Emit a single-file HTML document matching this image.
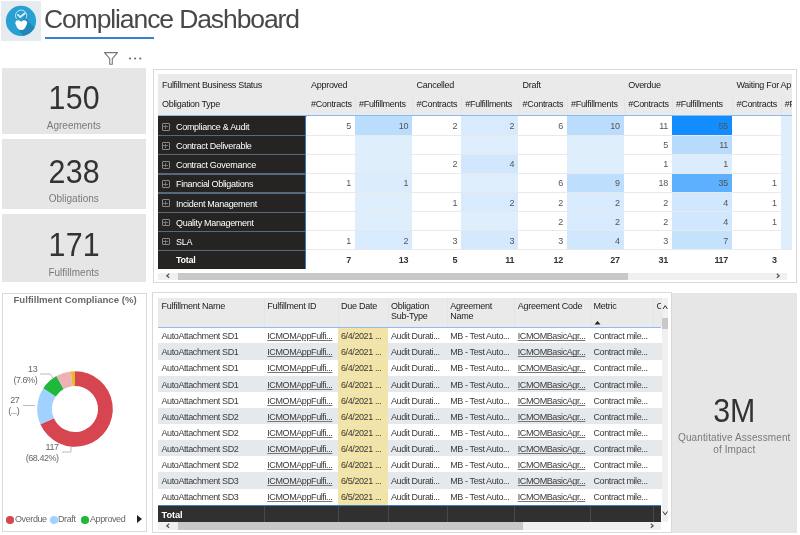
<!DOCTYPE html><html><head><meta charset="utf-8"><style>
*{margin:0;padding:0;box-sizing:border-box}
html,body{width:800px;height:535px;overflow:hidden;background:#fff;font-family:"Liberation Sans",sans-serif}
.abs{position:absolute}
.t{position:absolute;white-space:nowrap;line-height:1}
.card{position:absolute;background:#e6e6e6}
.num{position:absolute;left:0;right:0;text-align:center;color:#333;font-size:33px;line-height:1;letter-spacing:0.3px;transform:scaleX(0.92)}
.lab{position:absolute;left:0;right:0;text-align:center;color:#7a7a7a;font-size:10px;line-height:1}
.mx{font-size:9px;letter-spacing:-0.3px;color:#1a1a1a}
.dt{font-size:9px;letter-spacing:-0.4px;color:#3a3a3a}
.u{text-decoration:underline;text-decoration-color:#777}
</style></head><body><div style="position:absolute;left:0;top:0;width:800px;height:535px;will-change:transform">
<div class="abs" style="left:1px;top:1px;width:40px;height:40px;background:#e6ebef"></div>
<svg class="abs" style="left:0;top:0" width="44" height="44" viewBox="0 0 44 44">
<defs><clipPath id="cc"><circle cx="21" cy="20.9" r="15.1"/></clipPath></defs>
<circle cx="21" cy="20.9" r="15.1" fill="#29a0d4"/>
<g clip-path="url(#cc)"><path d="M26.5 12.5 L27.8 21 L45 38 L30 46 L19 30 Z" fill="#1f7fae" opacity="0.75"/></g>
<path d="M16.6 19 A5.6 5.6 0 1 1 25.6 19" fill="none" stroke="#fff" stroke-width="0.9" opacity="0.8"/>
<path d="M17.5 14.3 L20.2 17 L25.3 13" fill="none" stroke="#fff" stroke-width="1.7" opacity="0.85"/>
<path d="M15.2 22.5 L16.5 20.5 L18.8 20.3 L21.2 21.8 L23.6 20.3 L25.9 20.5 L27.3 22.5 L26.6 24.8 L25.2 27.8 L23.6 29.6 L21.2 30 L18.8 29.6 L17.2 27.8 L15.8 24.8 Z" fill="#fff"/>
</svg>
<div class="t" style="left:44px;top:3.5px;font-size:26.5px;color:#484848;letter-spacing:-1.1px;line-height:30px">Compliance Dashboard</div>
<div class="abs" style="left:44.5px;top:37px;width:109.5px;height:1.5px;background:#3a80d2"></div>
<svg class="abs" style="left:100px;top:48px" width="50" height="20" viewBox="0 0 50 20">
<path d="M4.5 4.6 H17.5 L12.3 10.6 V16.3 H9.7 V10.6 Z" fill="none" stroke="#777" stroke-width="1.1" stroke-linejoin="round"/>
<circle cx="30" cy="10.5" r="1.05" fill="#666"/><circle cx="35.1" cy="10.5" r="1.05" fill="#666"/><circle cx="40.3" cy="10.5" r="1.05" fill="#666"/>
</svg>
<div class="card" style="left:1.5px;top:68px;width:144.5px;height:66px"><div class="num" style="top:13.3px">150</div><div class="lab" style="top:52.9px">Agreements</div></div>
<div class="card" style="left:1.5px;top:139px;width:144.5px;height:70px"><div class="num" style="top:15.8px">238</div><div class="lab" style="top:55.2px">Obligations</div></div>
<div class="card" style="left:1.5px;top:214px;width:144.5px;height:68px"><div class="num" style="top:13.6px">171</div><div class="lab" style="top:53.5px">Fulfillments</div></div>
<div class="abs" style="left:152.5px;top:68.5px;width:644px;height:214.3px;border:1px solid #d9d9d9;background:#fff"></div>
<div class="abs" style="left:158px;top:74px;width:634px;height:41px;background:#eaeaea"></div>
<div class="abs" style="left:158px;top:115px;width:634px;height:1.5px;background:#86baf0"></div>
<div class="t mx" style="left:162px;top:80.5px">Fulfillment Business Status</div>
<div class="t mx" style="left:162px;top:99.5px">Obligation Type</div>
<div style="position:absolute;left:0;top:0;width:792px;height:535px;overflow:hidden">
<div class="t mx" style="left:311.1px;top:80.5px">Approved</div>
<div class="t mx" style="left:311.1px;top:99.5px">#Contracts</div>
<div class="t mx" style="left:359px;top:99.5px">#Fulfillments</div>
<div class="t mx" style="left:416.6px;top:80.5px">Cancelled</div>
<div class="t mx" style="left:416.6px;top:99.5px">#Contracts</div>
<div class="t mx" style="left:465.3px;top:99.5px">#Fulfillments</div>
<div class="t mx" style="left:522.6px;top:80.5px">Draft</div>
<div class="t mx" style="left:522.6px;top:99.5px">#Contracts</div>
<div class="t mx" style="left:571px;top:99.5px">#Fulfillments</div>
<div class="t mx" style="left:628.25px;top:80.5px">Overdue</div>
<div class="t mx" style="left:628.25px;top:99.5px">#Contracts</div>
<div class="t mx" style="left:676px;top:99.5px">#Fulfillments</div>
<div class="t mx" style="left:736.5px;top:80.5px">Waiting For Ap</div>
<div class="t mx" style="left:736.5px;top:99.5px">#Contracts</div>
<div class="t mx" style="left:784.7px;top:99.5px">#Fulfillments</div>
<div class="abs" style="left:355px;top:95px;width:1px;height:20px;background:#dde6ee"></div>
<div class="abs" style="left:412.1px;top:95px;width:1px;height:20px;background:#dde6ee"></div>
<div class="abs" style="left:461.3px;top:95px;width:1px;height:20px;background:#dde6ee"></div>
<div class="abs" style="left:518.1px;top:95px;width:1px;height:20px;background:#dde6ee"></div>
<div class="abs" style="left:567px;top:95px;width:1px;height:20px;background:#dde6ee"></div>
<div class="abs" style="left:623.75px;top:95px;width:1px;height:20px;background:#dde6ee"></div>
<div class="abs" style="left:672px;top:95px;width:1px;height:20px;background:#dde6ee"></div>
<div class="abs" style="left:732px;top:95px;width:1px;height:20px;background:#dde6ee"></div>
<div class="abs" style="left:780.7px;top:95px;width:1px;height:20px;background:#dde6ee"></div>
<div class="abs" style="left:158px;top:116.0px;width:148px;height:19.14px;background:#252423"></div>
<div class="abs" style="left:306.6px;top:116.0px;width:48.39999999999998px;height:19.14px;background:#fff"></div>
<div class="t mx" style="left:306.6px;width:44.39999999999998px;text-align:right;top:122.0px;color:#555">5</div>
<div class="abs" style="left:355px;top:116.0px;width:57.10000000000002px;height:19.14px;background:#badcfd"></div>
<div class="t mx" style="left:355px;width:53.10000000000002px;text-align:right;top:122.0px;color:#555">10</div>
<div class="abs" style="left:412.1px;top:116.0px;width:49.19999999999999px;height:19.14px;background:#fff"></div>
<div class="t mx" style="left:412.1px;width:45.19999999999999px;text-align:right;top:122.0px;color:#555">2</div>
<div class="abs" style="left:461.3px;top:116.0px;width:56.80000000000001px;height:19.14px;background:#d8eafd"></div>
<div class="t mx" style="left:461.3px;width:52.80000000000001px;text-align:right;top:122.0px;color:#555">2</div>
<div class="abs" style="left:518.1px;top:116.0px;width:48.89999999999998px;height:19.14px;background:#fff"></div>
<div class="t mx" style="left:518.1px;width:44.89999999999998px;text-align:right;top:122.0px;color:#555">6</div>
<div class="abs" style="left:567px;top:116.0px;width:56.75px;height:19.14px;background:#badcfd"></div>
<div class="t mx" style="left:567px;width:52.75px;text-align:right;top:122.0px;color:#555">10</div>
<div class="abs" style="left:623.75px;top:116.0px;width:48.25px;height:19.14px;background:#fff"></div>
<div class="t mx" style="left:623.75px;width:44.25px;text-align:right;top:122.0px;color:#555">11</div>
<div class="abs" style="left:672px;top:116.0px;width:60px;height:19.14px;background:#118dff"></div>
<div class="t mx" style="left:672px;width:56px;text-align:right;top:122.0px;color:#555">55</div>
<div class="abs" style="left:732px;top:116.0px;width:48.700000000000045px;height:19.14px;background:#fff"></div>
<div class="abs" style="left:780.7px;top:116.0px;width:57.299999999999955px;height:19.14px;background:#dfeefd"></div>
<div class="abs" style="left:161.5px;top:122.8px;width:8px;height:7.8px;border:1.2px solid #888;border-radius:1px"></div>
<div class="abs" style="left:165px;top:124.8px;width:1px;height:4px;background:#777"></div>
<div class="abs" style="left:163.2px;top:126.3px;width:4.6px;height:1px;background:#777"></div>
<div class="t mx" style="left:176px;top:123.0px;color:#fff">Compliance &amp; Audit</div>
<div class="abs" style="left:158px;top:135.14px;width:148px;height:19.14px;background:#252423"></div>
<div class="abs" style="left:306.6px;top:135.14px;width:48.39999999999998px;height:19.14px;background:#fff"></div>
<div class="abs" style="left:355px;top:135.14px;width:57.10000000000002px;height:19.14px;background:#dfeefd"></div>
<div class="abs" style="left:412.1px;top:135.14px;width:49.19999999999999px;height:19.14px;background:#fff"></div>
<div class="abs" style="left:461.3px;top:135.14px;width:56.80000000000001px;height:19.14px;background:#dfeefd"></div>
<div class="abs" style="left:518.1px;top:135.14px;width:48.89999999999998px;height:19.14px;background:#fff"></div>
<div class="abs" style="left:567px;top:135.14px;width:56.75px;height:19.14px;background:#dfeefd"></div>
<div class="abs" style="left:623.75px;top:135.14px;width:48.25px;height:19.14px;background:#fff"></div>
<div class="t mx" style="left:623.75px;width:44.25px;text-align:right;top:141.14px;color:#555">5</div>
<div class="abs" style="left:672px;top:135.14px;width:60px;height:19.14px;background:#b6dbfd"></div>
<div class="t mx" style="left:672px;width:56px;text-align:right;top:141.14px;color:#555">11</div>
<div class="abs" style="left:732px;top:135.14px;width:48.700000000000045px;height:19.14px;background:#fff"></div>
<div class="abs" style="left:780.7px;top:135.14px;width:57.299999999999955px;height:19.14px;background:#dfeefd"></div>
<div class="abs" style="left:161.5px;top:141.94px;width:8px;height:7.8px;border:1.2px solid #888;border-radius:1px"></div>
<div class="abs" style="left:165px;top:143.94px;width:1px;height:4px;background:#777"></div>
<div class="abs" style="left:163.2px;top:145.44px;width:4.6px;height:1px;background:#777"></div>
<div class="t mx" style="left:176px;top:142.14px;color:#fff">Contract Deliverable</div>
<div class="abs" style="left:158px;top:154.28px;width:148px;height:19.14px;background:#252423"></div>
<div class="abs" style="left:306.6px;top:154.28px;width:48.39999999999998px;height:19.14px;background:#fff"></div>
<div class="abs" style="left:355px;top:154.28px;width:57.10000000000002px;height:19.14px;background:#dfeefd"></div>
<div class="abs" style="left:412.1px;top:154.28px;width:49.19999999999999px;height:19.14px;background:#fff"></div>
<div class="t mx" style="left:412.1px;width:45.19999999999999px;text-align:right;top:160.28px;color:#555">2</div>
<div class="abs" style="left:461.3px;top:154.28px;width:56.80000000000001px;height:19.14px;background:#d0e7fd"></div>
<div class="t mx" style="left:461.3px;width:52.80000000000001px;text-align:right;top:160.28px;color:#555">4</div>
<div class="abs" style="left:518.1px;top:154.28px;width:48.89999999999998px;height:19.14px;background:#fff"></div>
<div class="abs" style="left:567px;top:154.28px;width:56.75px;height:19.14px;background:#dfeefd"></div>
<div class="abs" style="left:623.75px;top:154.28px;width:48.25px;height:19.14px;background:#fff"></div>
<div class="t mx" style="left:623.75px;width:44.25px;text-align:right;top:160.28px;color:#555">1</div>
<div class="abs" style="left:672px;top:154.28px;width:60px;height:19.14px;background:#dbecfd"></div>
<div class="t mx" style="left:672px;width:56px;text-align:right;top:160.28px;color:#555">1</div>
<div class="abs" style="left:732px;top:154.28px;width:48.700000000000045px;height:19.14px;background:#fff"></div>
<div class="abs" style="left:780.7px;top:154.28px;width:57.299999999999955px;height:19.14px;background:#dfeefd"></div>
<div class="abs" style="left:161.5px;top:161.08px;width:8px;height:7.8px;border:1.2px solid #888;border-radius:1px"></div>
<div class="abs" style="left:165px;top:163.08px;width:1px;height:4px;background:#777"></div>
<div class="abs" style="left:163.2px;top:164.58px;width:4.6px;height:1px;background:#777"></div>
<div class="t mx" style="left:176px;top:161.28px;color:#fff">Contract Governance</div>
<div class="abs" style="left:158px;top:173.42000000000002px;width:148px;height:19.14px;background:#252423"></div>
<div class="abs" style="left:306.6px;top:173.42000000000002px;width:48.39999999999998px;height:19.14px;background:#fff"></div>
<div class="t mx" style="left:306.6px;width:44.39999999999998px;text-align:right;top:179.42000000000002px;color:#555">1</div>
<div class="abs" style="left:355px;top:173.42000000000002px;width:57.10000000000002px;height:19.14px;background:#dbecfd"></div>
<div class="t mx" style="left:355px;width:53.10000000000002px;text-align:right;top:179.42000000000002px;color:#555">1</div>
<div class="abs" style="left:412.1px;top:173.42000000000002px;width:49.19999999999999px;height:19.14px;background:#fff"></div>
<div class="abs" style="left:461.3px;top:173.42000000000002px;width:56.80000000000001px;height:19.14px;background:#dfeefd"></div>
<div class="abs" style="left:518.1px;top:173.42000000000002px;width:48.89999999999998px;height:19.14px;background:#fff"></div>
<div class="t mx" style="left:518.1px;width:44.89999999999998px;text-align:right;top:179.42000000000002px;color:#555">6</div>
<div class="abs" style="left:567px;top:173.42000000000002px;width:56.75px;height:19.14px;background:#bddefd"></div>
<div class="t mx" style="left:567px;width:52.75px;text-align:right;top:179.42000000000002px;color:#555">9</div>
<div class="abs" style="left:623.75px;top:173.42000000000002px;width:48.25px;height:19.14px;background:#fff"></div>
<div class="t mx" style="left:623.75px;width:44.25px;text-align:right;top:179.42000000000002px;color:#555">18</div>
<div class="abs" style="left:672px;top:173.42000000000002px;width:60px;height:19.14px;background:#5cb0fe"></div>
<div class="t mx" style="left:672px;width:56px;text-align:right;top:179.42000000000002px;color:#555">35</div>
<div class="abs" style="left:732px;top:173.42000000000002px;width:48.700000000000045px;height:19.14px;background:#fff"></div>
<div class="t mx" style="left:732px;width:44.700000000000045px;text-align:right;top:179.42000000000002px;color:#555">1</div>
<div class="abs" style="left:780.7px;top:173.42000000000002px;width:57.299999999999955px;height:19.14px;background:#dfeefd"></div>
<div class="abs" style="left:161.5px;top:180.22000000000003px;width:8px;height:7.8px;border:1.2px solid #888;border-radius:1px"></div>
<div class="abs" style="left:165px;top:182.22000000000003px;width:1px;height:4px;background:#777"></div>
<div class="abs" style="left:163.2px;top:183.72000000000003px;width:4.6px;height:1px;background:#777"></div>
<div class="t mx" style="left:176px;top:180.42000000000002px;color:#fff">Financial Obligations</div>
<div class="abs" style="left:158px;top:192.56px;width:148px;height:19.14px;background:#252423"></div>
<div class="abs" style="left:306.6px;top:192.56px;width:48.39999999999998px;height:19.14px;background:#fff"></div>
<div class="abs" style="left:355px;top:192.56px;width:57.10000000000002px;height:19.14px;background:#dfeefd"></div>
<div class="abs" style="left:412.1px;top:192.56px;width:49.19999999999999px;height:19.14px;background:#fff"></div>
<div class="t mx" style="left:412.1px;width:45.19999999999999px;text-align:right;top:198.56px;color:#555">1</div>
<div class="abs" style="left:461.3px;top:192.56px;width:56.80000000000001px;height:19.14px;background:#d8eafd"></div>
<div class="t mx" style="left:461.3px;width:52.80000000000001px;text-align:right;top:198.56px;color:#555">2</div>
<div class="abs" style="left:518.1px;top:192.56px;width:48.89999999999998px;height:19.14px;background:#fff"></div>
<div class="t mx" style="left:518.1px;width:44.89999999999998px;text-align:right;top:198.56px;color:#555">2</div>
<div class="abs" style="left:567px;top:192.56px;width:56.75px;height:19.14px;background:#d8eafd"></div>
<div class="t mx" style="left:567px;width:52.75px;text-align:right;top:198.56px;color:#555">2</div>
<div class="abs" style="left:623.75px;top:192.56px;width:48.25px;height:19.14px;background:#fff"></div>
<div class="t mx" style="left:623.75px;width:44.25px;text-align:right;top:198.56px;color:#555">2</div>
<div class="abs" style="left:672px;top:192.56px;width:60px;height:19.14px;background:#d0e7fd"></div>
<div class="t mx" style="left:672px;width:56px;text-align:right;top:198.56px;color:#555">4</div>
<div class="abs" style="left:732px;top:192.56px;width:48.700000000000045px;height:19.14px;background:#fff"></div>
<div class="t mx" style="left:732px;width:44.700000000000045px;text-align:right;top:198.56px;color:#555">1</div>
<div class="abs" style="left:780.7px;top:192.56px;width:57.299999999999955px;height:19.14px;background:#dfeefd"></div>
<div class="abs" style="left:161.5px;top:199.36px;width:8px;height:7.8px;border:1.2px solid #888;border-radius:1px"></div>
<div class="abs" style="left:165px;top:201.36px;width:1px;height:4px;background:#777"></div>
<div class="abs" style="left:163.2px;top:202.86px;width:4.6px;height:1px;background:#777"></div>
<div class="t mx" style="left:176px;top:199.56px;color:#fff">Incident Management</div>
<div class="abs" style="left:158px;top:211.7px;width:148px;height:19.14px;background:#252423"></div>
<div class="abs" style="left:306.6px;top:211.7px;width:48.39999999999998px;height:19.14px;background:#fff"></div>
<div class="abs" style="left:355px;top:211.7px;width:57.10000000000002px;height:19.14px;background:#dfeefd"></div>
<div class="abs" style="left:412.1px;top:211.7px;width:49.19999999999999px;height:19.14px;background:#fff"></div>
<div class="abs" style="left:461.3px;top:211.7px;width:56.80000000000001px;height:19.14px;background:#dfeefd"></div>
<div class="abs" style="left:518.1px;top:211.7px;width:48.89999999999998px;height:19.14px;background:#fff"></div>
<div class="t mx" style="left:518.1px;width:44.89999999999998px;text-align:right;top:217.7px;color:#555">2</div>
<div class="abs" style="left:567px;top:211.7px;width:56.75px;height:19.14px;background:#d8eafd"></div>
<div class="t mx" style="left:567px;width:52.75px;text-align:right;top:217.7px;color:#555">2</div>
<div class="abs" style="left:623.75px;top:211.7px;width:48.25px;height:19.14px;background:#fff"></div>
<div class="t mx" style="left:623.75px;width:44.25px;text-align:right;top:217.7px;color:#555">2</div>
<div class="abs" style="left:672px;top:211.7px;width:60px;height:19.14px;background:#d0e7fd"></div>
<div class="t mx" style="left:672px;width:56px;text-align:right;top:217.7px;color:#555">4</div>
<div class="abs" style="left:732px;top:211.7px;width:48.700000000000045px;height:19.14px;background:#fff"></div>
<div class="t mx" style="left:732px;width:44.700000000000045px;text-align:right;top:217.7px;color:#555">1</div>
<div class="abs" style="left:780.7px;top:211.7px;width:57.299999999999955px;height:19.14px;background:#dfeefd"></div>
<div class="abs" style="left:161.5px;top:218.5px;width:8px;height:7.8px;border:1.2px solid #888;border-radius:1px"></div>
<div class="abs" style="left:165px;top:220.5px;width:1px;height:4px;background:#777"></div>
<div class="abs" style="left:163.2px;top:222.0px;width:4.6px;height:1px;background:#777"></div>
<div class="t mx" style="left:176px;top:218.7px;color:#fff">Quality Management</div>
<div class="abs" style="left:158px;top:230.84px;width:148px;height:19.14px;background:#252423"></div>
<div class="abs" style="left:306.6px;top:230.84px;width:48.39999999999998px;height:19.14px;background:#fff"></div>
<div class="t mx" style="left:306.6px;width:44.39999999999998px;text-align:right;top:236.84px;color:#555">1</div>
<div class="abs" style="left:355px;top:230.84px;width:57.10000000000002px;height:19.14px;background:#d8eafd"></div>
<div class="t mx" style="left:355px;width:53.10000000000002px;text-align:right;top:236.84px;color:#555">2</div>
<div class="abs" style="left:412.1px;top:230.84px;width:49.19999999999999px;height:19.14px;background:#fff"></div>
<div class="t mx" style="left:412.1px;width:45.19999999999999px;text-align:right;top:236.84px;color:#555">3</div>
<div class="abs" style="left:461.3px;top:230.84px;width:56.80000000000001px;height:19.14px;background:#d4e9fd"></div>
<div class="t mx" style="left:461.3px;width:52.80000000000001px;text-align:right;top:236.84px;color:#555">3</div>
<div class="abs" style="left:518.1px;top:230.84px;width:48.89999999999998px;height:19.14px;background:#fff"></div>
<div class="t mx" style="left:518.1px;width:44.89999999999998px;text-align:right;top:236.84px;color:#555">3</div>
<div class="abs" style="left:567px;top:230.84px;width:56.75px;height:19.14px;background:#d0e7fd"></div>
<div class="t mx" style="left:567px;width:52.75px;text-align:right;top:236.84px;color:#555">4</div>
<div class="abs" style="left:623.75px;top:230.84px;width:48.25px;height:19.14px;background:#fff"></div>
<div class="t mx" style="left:623.75px;width:44.25px;text-align:right;top:236.84px;color:#555">3</div>
<div class="abs" style="left:672px;top:230.84px;width:60px;height:19.14px;background:#c5e2fd"></div>
<div class="t mx" style="left:672px;width:56px;text-align:right;top:236.84px;color:#555">7</div>
<div class="abs" style="left:732px;top:230.84px;width:48.700000000000045px;height:19.14px;background:#fff"></div>
<div class="abs" style="left:780.7px;top:230.84px;width:57.299999999999955px;height:19.14px;background:#dfeefd"></div>
<div class="abs" style="left:161.5px;top:237.64000000000001px;width:8px;height:7.8px;border:1.2px solid #888;border-radius:1px"></div>
<div class="abs" style="left:165px;top:239.64000000000001px;width:1px;height:4px;background:#777"></div>
<div class="abs" style="left:163.2px;top:241.14000000000001px;width:4.6px;height:1px;background:#777"></div>
<div class="t mx" style="left:176px;top:237.84px;color:#fff">SLA</div>
<div class="abs" style="left:158px;top:249.98000000000002px;width:148px;height:19.14px;background:#252423"></div>
<div class="abs" style="left:306px;top:134.64px;width:486px;height:1px;background:#e9e9e9"></div>
<div class="abs" style="left:158px;top:135.04px;width:148px;height:1.3px;background:#56697d"></div>
<div class="abs" style="left:306px;top:153.77999999999997px;width:486px;height:1px;background:#e9e9e9"></div>
<div class="abs" style="left:158px;top:154.17999999999998px;width:148px;height:1.3px;background:#56697d"></div>
<div class="abs" style="left:306px;top:172.92000000000002px;width:486px;height:1px;background:#e9e9e9"></div>
<div class="abs" style="left:158px;top:173.32000000000002px;width:148px;height:1.3px;background:#56697d"></div>
<div class="abs" style="left:306px;top:192.06px;width:486px;height:1px;background:#e9e9e9"></div>
<div class="abs" style="left:158px;top:192.46px;width:148px;height:1.3px;background:#56697d"></div>
<div class="abs" style="left:306px;top:211.2px;width:486px;height:1px;background:#e9e9e9"></div>
<div class="abs" style="left:158px;top:211.6px;width:148px;height:1.3px;background:#56697d"></div>
<div class="abs" style="left:306px;top:230.33999999999997px;width:486px;height:1px;background:#e9e9e9"></div>
<div class="abs" style="left:158px;top:230.73999999999998px;width:148px;height:1.3px;background:#56697d"></div>
<div class="abs" style="left:306px;top:249.48000000000002px;width:486px;height:1px;background:#e9e9e9"></div>
<div class="abs" style="left:158px;top:249.88000000000002px;width:148px;height:1.3px;background:#56697d"></div>
<div class="t mx" style="left:176px;top:256.48px;color:#fff;font-weight:bold">Total</div>
<div class="abs" style="left:305.2px;top:116px;width:1.2px;height:153px;background:#3b78b8"></div>
<div class="t mx" style="left:306.6px;width:44.39999999999998px;text-align:right;top:256.48px;color:#333;font-weight:bold">7</div>
<div class="t mx" style="left:355px;width:53.10000000000002px;text-align:right;top:256.48px;color:#333;font-weight:bold">13</div>
<div class="t mx" style="left:412.1px;width:45.19999999999999px;text-align:right;top:256.48px;color:#333;font-weight:bold">5</div>
<div class="t mx" style="left:461.3px;width:52.80000000000001px;text-align:right;top:256.48px;color:#333;font-weight:bold">11</div>
<div class="t mx" style="left:518.1px;width:44.89999999999998px;text-align:right;top:256.48px;color:#333;font-weight:bold">12</div>
<div class="t mx" style="left:567px;width:52.75px;text-align:right;top:256.48px;color:#333;font-weight:bold">27</div>
<div class="t mx" style="left:623.75px;width:44.25px;text-align:right;top:256.48px;color:#333;font-weight:bold">31</div>
<div class="t mx" style="left:672px;width:56px;text-align:right;top:256.48px;color:#333;font-weight:bold">117</div>
<div class="t mx" style="left:732px;width:44.700000000000045px;text-align:right;top:256.48px;color:#333;font-weight:bold">3</div>
</div>
<div class="abs" style="left:158px;top:272.5px;width:629px;height:7px;background:#f0f0f0"></div>
<div class="abs" style="left:178px;top:272.5px;width:450px;height:7px;background:#c8c8c8"></div>
<svg class="abs" style="left:166px;top:273.3px" width="4" height="6"><path d="M3.2 0.8 L0.8 2.8 L3.2 4.8" fill="none" stroke="#555" stroke-width="1.2"/></svg>
<svg class="abs" style="left:776px;top:273.3px" width="4" height="6"><path d="M0.8 0.8 L3.2 2.8 L0.8 4.8" fill="none" stroke="#555" stroke-width="1.2"/></svg>
<div class="abs" style="left:1.5px;top:293px;width:145.2px;height:239.2px;border:1px solid #d9d9d9;background:#fff"></div>
<div class="t" style="left:13.5px;top:294.5px;font-size:9.6px;font-weight:bold;color:#6a6a6a;letter-spacing:0px">Fulfillment Compliance (%)</div>
<svg class="abs" style="left:0;top:0" width="150" height="535"><path d="M75.00 371.20 A37.8 37.8 0 1 1 40.38 424.18 L53.94 418.24 A23 23 0 1 0 75.00 386.00 Z" fill="#d64550"/><path d="M40.38 424.18 A37.8 37.8 0 0 1 43.36 388.33 L55.75 396.42 A23 23 0 0 0 53.94 418.24 Z" fill="#a0d1ff"/><path d="M43.36 388.33 A37.8 37.8 0 0 1 56.40 376.09 L63.68 388.98 A23 23 0 0 0 55.75 396.42 Z" fill="#1fb83a"/><path d="M56.40 376.09 A37.8 37.8 0 0 1 70.84 371.43 L72.47 386.14 A23 23 0 0 0 63.68 388.98 Z" fill="#eeb1b6"/><path d="M70.84 371.43 A37.8 37.8 0 0 1 75.00 371.20 L75.00 386.00 A23 23 0 0 0 72.47 386.14 Z" fill="#e5bd2a"/><path d="M40 374 H50 L53 378" fill="none" stroke="#aaa" stroke-width="0.8"/><path d="M23 405.5 H35" fill="none" stroke="#aaa" stroke-width="0.8"/><path d="M62 452 H71 V447" fill="none" stroke="#aaa" stroke-width="0.8"/></svg>
<div class="t" style="left:-22.799999999999997px;top:365px;font-size:9px;color:#666;letter-spacing:-0.45px;text-align:right;width:60px">13</div>
<div class="t" style="left:-22.799999999999997px;top:376px;font-size:9px;color:#666;letter-spacing:-0.45px;text-align:right;width:60px">(7.6%)</div>
<div class="t" style="left:-40.6px;top:396px;font-size:9px;color:#666;letter-spacing:-0.45px;text-align:right;width:60px">27</div>
<div class="t" style="left:-40.6px;top:407px;font-size:9px;color:#666;letter-spacing:-0.45px;text-align:right;width:60px">(...)</div>
<div class="t" style="left:-1.3999999999999986px;top:443px;font-size:9px;color:#666;letter-spacing:-0.45px;text-align:right;width:60px">117</div>
<div class="t" style="left:-1.3999999999999986px;top:454px;font-size:9px;color:#666;letter-spacing:-0.45px;text-align:right;width:60px">(68.42%)</div>
<div class="abs" style="left:6px;top:516px;width:7.5px;height:7.5px;border-radius:50%;background:#d64550"></div>
<div class="t" style="left:15px;top:515px;font-size:9px;color:#666;letter-spacing:-0.4px">Overdue</div>
<div class="abs" style="left:50px;top:516px;width:7.5px;height:7.5px;border-radius:50%;background:#a0d1ff"></div>
<div class="t" style="left:58px;top:515px;font-size:9px;color:#666;letter-spacing:-0.4px">Draft</div>
<div class="abs" style="left:81px;top:516px;width:7.5px;height:7.5px;border-radius:50%;background:#1fb83a"></div>
<div class="t" style="left:90px;top:515px;font-size:9px;color:#666;letter-spacing:-0.4px">Approved</div>
<svg class="abs" style="left:136px;top:514px" width="8" height="10"><path d="M1 1 L6 5 L1 9 Z" fill="#222"/></svg>
<div class="abs" style="left:152px;top:292px;width:519.5px;height:240.5px;border:1px solid #d9d9d9;background:#fff"></div>
<div class="abs" style="left:158px;top:297.5px;width:504px;height:29.5px;background:#eaeaea"></div>
<div class="abs" style="left:158px;top:327.8px;width:504px;height:16.08px;background:#fff"></div>
<div class="abs" style="left:337.5px;top:327.8px;width:50px;height:16.08px;background:#f2e3a6"></div>
<div class="t dt" style="left:161.5px;top:332.3px">AutoAttachment SD1</div>
<div class="t dt u" style="left:267.25px;top:332.3px">ICMOMAppFulfi...</div>
<div class="t dt" style="left:341.0px;top:332.3px">6/4/2021 ...</div>
<div class="t dt" style="left:391.0px;top:332.3px">Audit Durati...</div>
<div class="t dt" style="left:450.25px;top:332.3px">MB - Test Auto...</div>
<div class="t dt u" style="left:517.75px;top:332.3px">ICMOMBasicAgr...</div>
<div class="t dt" style="left:593.5px;top:332.3px">Contract mile...</div>
<div class="abs" style="left:158px;top:343.43px;width:504px;height:16.979999999999997px;background:#e6e9ec"></div>
<div class="abs" style="left:337.5px;top:343.43px;width:50px;height:16.979999999999997px;background:#f2e3a6"></div>
<div class="abs" style="left:337.5px;top:343.38px;width:50px;height:1px;background:#ebe4c6"></div>
<div class="t dt" style="left:161.5px;top:348.38px">AutoAttachment SD1</div>
<div class="t dt u" style="left:267.25px;top:348.38px">ICMOMAppFulfi...</div>
<div class="t dt" style="left:341.0px;top:348.38px">6/4/2021 ...</div>
<div class="t dt" style="left:391.0px;top:348.38px">Audit Durati...</div>
<div class="t dt" style="left:450.25px;top:348.38px">MB - Test Auto...</div>
<div class="t dt u" style="left:517.75px;top:348.38px">ICMOMBasicAgr...</div>
<div class="t dt" style="left:593.5px;top:348.38px">Contract mile...</div>
<div class="abs" style="left:158px;top:359.96000000000004px;width:504px;height:16.08px;background:#fff"></div>
<div class="abs" style="left:337.5px;top:359.96000000000004px;width:50px;height:16.08px;background:#f2e3a6"></div>
<div class="abs" style="left:337.5px;top:359.46000000000004px;width:50px;height:1px;background:#ebe4c6"></div>
<div class="t dt" style="left:161.5px;top:364.46000000000004px">AutoAttachment SD1</div>
<div class="t dt u" style="left:267.25px;top:364.46000000000004px">ICMOMAppFulfi...</div>
<div class="t dt" style="left:341.0px;top:364.46000000000004px">6/4/2021 ...</div>
<div class="t dt" style="left:391.0px;top:364.46000000000004px">Audit Durati...</div>
<div class="t dt" style="left:450.25px;top:364.46000000000004px">MB - Test Auto...</div>
<div class="t dt u" style="left:517.75px;top:364.46000000000004px">ICMOMBasicAgr...</div>
<div class="t dt" style="left:593.5px;top:364.46000000000004px">Contract mile...</div>
<div class="abs" style="left:158px;top:375.59000000000003px;width:504px;height:16.979999999999997px;background:#e6e9ec"></div>
<div class="abs" style="left:337.5px;top:375.59000000000003px;width:50px;height:16.979999999999997px;background:#f2e3a6"></div>
<div class="abs" style="left:337.5px;top:375.54px;width:50px;height:1px;background:#ebe4c6"></div>
<div class="t dt" style="left:161.5px;top:380.54px">AutoAttachment SD1</div>
<div class="t dt u" style="left:267.25px;top:380.54px">ICMOMAppFulfi...</div>
<div class="t dt" style="left:341.0px;top:380.54px">6/4/2021 ...</div>
<div class="t dt" style="left:391.0px;top:380.54px">Audit Durati...</div>
<div class="t dt" style="left:450.25px;top:380.54px">MB - Test Auto...</div>
<div class="t dt u" style="left:517.75px;top:380.54px">ICMOMBasicAgr...</div>
<div class="t dt" style="left:593.5px;top:380.54px">Contract mile...</div>
<div class="abs" style="left:158px;top:392.12px;width:504px;height:16.08px;background:#fff"></div>
<div class="abs" style="left:337.5px;top:392.12px;width:50px;height:16.08px;background:#f2e3a6"></div>
<div class="abs" style="left:337.5px;top:391.62px;width:50px;height:1px;background:#ebe4c6"></div>
<div class="t dt" style="left:161.5px;top:396.62px">AutoAttachment SD1</div>
<div class="t dt u" style="left:267.25px;top:396.62px">ICMOMAppFulfi...</div>
<div class="t dt" style="left:341.0px;top:396.62px">6/4/2021 ...</div>
<div class="t dt" style="left:391.0px;top:396.62px">Audit Durati...</div>
<div class="t dt" style="left:450.25px;top:396.62px">MB - Test Auto...</div>
<div class="t dt u" style="left:517.75px;top:396.62px">ICMOMBasicAgr...</div>
<div class="t dt" style="left:593.5px;top:396.62px">Contract mile...</div>
<div class="abs" style="left:158px;top:407.75px;width:504px;height:16.979999999999997px;background:#e6e9ec"></div>
<div class="abs" style="left:337.5px;top:407.75px;width:50px;height:16.979999999999997px;background:#f2e3a6"></div>
<div class="abs" style="left:337.5px;top:407.7px;width:50px;height:1px;background:#ebe4c6"></div>
<div class="t dt" style="left:161.5px;top:412.7px">AutoAttachment SD2</div>
<div class="t dt u" style="left:267.25px;top:412.7px">ICMOMAppFulfi...</div>
<div class="t dt" style="left:341.0px;top:412.7px">6/4/2021 ...</div>
<div class="t dt" style="left:391.0px;top:412.7px">Audit Durati...</div>
<div class="t dt" style="left:450.25px;top:412.7px">MB - Test Auto...</div>
<div class="t dt u" style="left:517.75px;top:412.7px">ICMOMBasicAgr...</div>
<div class="t dt" style="left:593.5px;top:412.7px">Contract mile...</div>
<div class="abs" style="left:158px;top:424.28px;width:504px;height:16.08px;background:#fff"></div>
<div class="abs" style="left:337.5px;top:424.28px;width:50px;height:16.08px;background:#f2e3a6"></div>
<div class="abs" style="left:337.5px;top:423.78px;width:50px;height:1px;background:#ebe4c6"></div>
<div class="t dt" style="left:161.5px;top:428.78px">AutoAttachment SD2</div>
<div class="t dt u" style="left:267.25px;top:428.78px">ICMOMAppFulfi...</div>
<div class="t dt" style="left:341.0px;top:428.78px">6/4/2021 ...</div>
<div class="t dt" style="left:391.0px;top:428.78px">Audit Durati...</div>
<div class="t dt" style="left:450.25px;top:428.78px">MB - Test Auto...</div>
<div class="t dt u" style="left:517.75px;top:428.78px">ICMOMBasicAgr...</div>
<div class="t dt" style="left:593.5px;top:428.78px">Contract mile...</div>
<div class="abs" style="left:158px;top:439.91px;width:504px;height:16.979999999999997px;background:#e6e9ec"></div>
<div class="abs" style="left:337.5px;top:439.91px;width:50px;height:16.979999999999997px;background:#f2e3a6"></div>
<div class="abs" style="left:337.5px;top:439.86px;width:50px;height:1px;background:#ebe4c6"></div>
<div class="t dt" style="left:161.5px;top:444.86px">AutoAttachment SD2</div>
<div class="t dt u" style="left:267.25px;top:444.86px">ICMOMAppFulfi...</div>
<div class="t dt" style="left:341.0px;top:444.86px">6/4/2021 ...</div>
<div class="t dt" style="left:391.0px;top:444.86px">Audit Durati...</div>
<div class="t dt" style="left:450.25px;top:444.86px">MB - Test Auto...</div>
<div class="t dt u" style="left:517.75px;top:444.86px">ICMOMBasicAgr...</div>
<div class="t dt" style="left:593.5px;top:444.86px">Contract mile...</div>
<div class="abs" style="left:158px;top:456.44px;width:504px;height:16.08px;background:#fff"></div>
<div class="abs" style="left:337.5px;top:456.44px;width:50px;height:16.08px;background:#f2e3a6"></div>
<div class="abs" style="left:337.5px;top:455.94px;width:50px;height:1px;background:#ebe4c6"></div>
<div class="t dt" style="left:161.5px;top:460.94px">AutoAttachment SD2</div>
<div class="t dt u" style="left:267.25px;top:460.94px">ICMOMAppFulfi...</div>
<div class="t dt" style="left:341.0px;top:460.94px">6/4/2021 ...</div>
<div class="t dt" style="left:391.0px;top:460.94px">Audit Durati...</div>
<div class="t dt" style="left:450.25px;top:460.94px">MB - Test Auto...</div>
<div class="t dt u" style="left:517.75px;top:460.94px">ICMOMBasicAgr...</div>
<div class="t dt" style="left:593.5px;top:460.94px">Contract mile...</div>
<div class="abs" style="left:158px;top:472.07px;width:504px;height:16.979999999999997px;background:#e6e9ec"></div>
<div class="abs" style="left:337.5px;top:472.07px;width:50px;height:16.979999999999997px;background:#f2e3a6"></div>
<div class="abs" style="left:337.5px;top:472.02px;width:50px;height:1px;background:#ebe4c6"></div>
<div class="t dt" style="left:161.5px;top:477.02px">AutoAttachment SD3</div>
<div class="t dt u" style="left:267.25px;top:477.02px">ICMOMAppFulfi...</div>
<div class="t dt" style="left:341.0px;top:477.02px">6/5/2021 ...</div>
<div class="t dt" style="left:391.0px;top:477.02px">Audit Durati...</div>
<div class="t dt" style="left:450.25px;top:477.02px">MB - Test Auto...</div>
<div class="t dt u" style="left:517.75px;top:477.02px">ICMOMBasicAgr...</div>
<div class="t dt" style="left:593.5px;top:477.02px">Contract mile...</div>
<div class="abs" style="left:158px;top:488.6px;width:504px;height:16.08px;background:#fff"></div>
<div class="abs" style="left:337.5px;top:488.6px;width:50px;height:16.08px;background:#f2e3a6"></div>
<div class="abs" style="left:337.5px;top:488.1px;width:50px;height:1px;background:#ebe4c6"></div>
<div class="t dt" style="left:161.5px;top:493.1px">AutoAttachment SD3</div>
<div class="t dt u" style="left:267.25px;top:493.1px">ICMOMAppFulfi...</div>
<div class="t dt" style="left:341.0px;top:493.1px">6/5/2021 ...</div>
<div class="t dt" style="left:391.0px;top:493.1px">Audit Durati...</div>
<div class="t dt" style="left:450.25px;top:493.1px">MB - Test Auto...</div>
<div class="t dt u" style="left:517.75px;top:493.1px">ICMOMBasicAgr...</div>
<div class="t dt" style="left:593.5px;top:493.1px">Contract mile...</div>
<div class="abs" style="left:161.5px;top:302px;font-size:9px;line-height:9.6px;color:#222;letter-spacing:-0.25px;white-space:nowrap;width:102.25px;overflow:hidden">Fulfillment Name</div>
<div class="abs" style="left:267.25px;top:302px;font-size:9px;line-height:9.6px;color:#222;letter-spacing:-0.25px;white-space:nowrap;width:70.25px;overflow:hidden">Fulfillment ID</div>
<div class="abs" style="left:263.75px;top:297.5px;width:1px;height:29.5px;background:#dde6ef"></div>
<div class="abs" style="left:341.0px;top:302px;font-size:9px;line-height:9.6px;color:#222;letter-spacing:-0.25px;white-space:nowrap;width:46.5px;overflow:hidden">Due Date</div>
<div class="abs" style="left:337.5px;top:297.5px;width:1px;height:29.5px;background:#dde6ef"></div>
<div class="abs" style="left:391.0px;top:302px;font-size:9px;line-height:9.6px;color:#222;letter-spacing:-0.25px;white-space:nowrap;width:55.75px;overflow:hidden">Obligation<br>Sub-Type</div>
<div class="abs" style="left:387.5px;top:297.5px;width:1px;height:29.5px;background:#dde6ef"></div>
<div class="abs" style="left:450.25px;top:302px;font-size:9px;line-height:9.6px;color:#222;letter-spacing:-0.25px;white-space:nowrap;width:64.0px;overflow:hidden">Agreement<br>Name</div>
<div class="abs" style="left:446.75px;top:297.5px;width:1px;height:29.5px;background:#dde6ef"></div>
<div class="abs" style="left:517.75px;top:302px;font-size:9px;line-height:9.6px;color:#222;letter-spacing:-0.25px;white-space:nowrap;width:72.25px;overflow:hidden">Agreement Code</div>
<div class="abs" style="left:514.25px;top:297.5px;width:1px;height:29.5px;background:#dde6ef"></div>
<div class="abs" style="left:593.5px;top:302px;font-size:9px;line-height:9.6px;color:#222;letter-spacing:-0.25px;white-space:nowrap;width:59.5px;overflow:hidden">Metric</div>
<div class="abs" style="left:590px;top:297.5px;width:1px;height:29.5px;background:#dde6ef"></div>
<div class="abs" style="left:656.5px;top:302px;font-size:9px;line-height:9.6px;color:#222;letter-spacing:-0.25px;white-space:nowrap;width:4.5px;overflow:hidden">C</div>
<div class="abs" style="left:653px;top:297.5px;width:1px;height:29.5px;background:#dde6ef"></div>
<svg class="abs" style="left:593.5px;top:319.5px" width="8" height="6"><path d="M0.5 4.5 L3.5 1 L6.5 4.5 Z" fill="#222"/></svg>
<div class="abs" style="left:158px;top:327px;width:503px;height:1px;background:#8dbdf0"></div>
<div class="abs" style="left:158px;top:504.8px;width:503px;height:1.2px;background:#3f7fbf"></div>
<div class="abs" style="left:158px;top:505.5px;width:503px;height:16.5px;background:#303030"></div>
<div class="abs" style="left:263.75px;top:505.5px;width:1px;height:16.5px;background:#3d4b58"></div>
<div class="abs" style="left:337.5px;top:505.5px;width:1px;height:16.5px;background:#3d4b58"></div>
<div class="abs" style="left:387.5px;top:505.5px;width:1px;height:16.5px;background:#3d4b58"></div>
<div class="abs" style="left:446.75px;top:505.5px;width:1px;height:16.5px;background:#3d4b58"></div>
<div class="abs" style="left:514.25px;top:505.5px;width:1px;height:16.5px;background:#3d4b58"></div>
<div class="abs" style="left:590px;top:505.5px;width:1px;height:16.5px;background:#3d4b58"></div>
<div class="abs" style="left:653px;top:505.5px;width:1px;height:16.5px;background:#3d4b58"></div>
<div class="t" style="left:161.5px;top:510.5px;font-size:9.3px;font-weight:bold;color:#fff;letter-spacing:-0.1px">Total</div>
<div class="abs" style="left:158px;top:522px;width:503px;height:7.5px;background:#f0f0f0"></div>
<div class="abs" style="left:178px;top:522px;width:345px;height:7.5px;background:#c8c8c8"></div>
<svg class="abs" style="left:166px;top:523px" width="4" height="6"><path d="M3.2 0.8 L0.8 2.8 L3.2 4.8" fill="none" stroke="#555" stroke-width="1.2"/></svg>
<svg class="abs" style="left:650px;top:523px" width="4" height="6"><path d="M0.8 0.8 L3.2 2.8 L0.8 4.8" fill="none" stroke="#555" stroke-width="1.2"/></svg>
<div class="abs" style="left:662px;top:297.5px;width:6px;height:224.5px;background:#f0f0f0"></div>
<div class="abs" style="left:662px;top:317.7px;width:5.5px;height:11.3px;background:#c8c8c8"></div>
<svg class="abs" style="left:662px;top:303px" width="7" height="8"><path d="M1 6 L3.2 2.6 L5.4 6" fill="none" stroke="#333" stroke-width="1"/></svg>
<svg class="abs" style="left:662px;top:509px" width="7" height="8"><path d="M1 2.5 L3.2 5.9 L5.4 2.5" fill="none" stroke="#333" stroke-width="1"/></svg>
<div class="card" style="left:672px;top:293px;width:124.5px;height:239.5px"></div>
<div class="t" style="left:672px;width:124.5px;text-align:center;top:394px;font-size:33px;color:#333;letter-spacing:0px;transform:scaleX(0.92)">3M</div>
<div class="t" style="left:672px;width:124.5px;text-align:center;top:432px;font-size:10px;line-height:12.3px;color:#7a7a7a;white-space:normal;letter-spacing:0.1px">Quantitative Assessment<br>of Impact</div>
</div></body></html>
